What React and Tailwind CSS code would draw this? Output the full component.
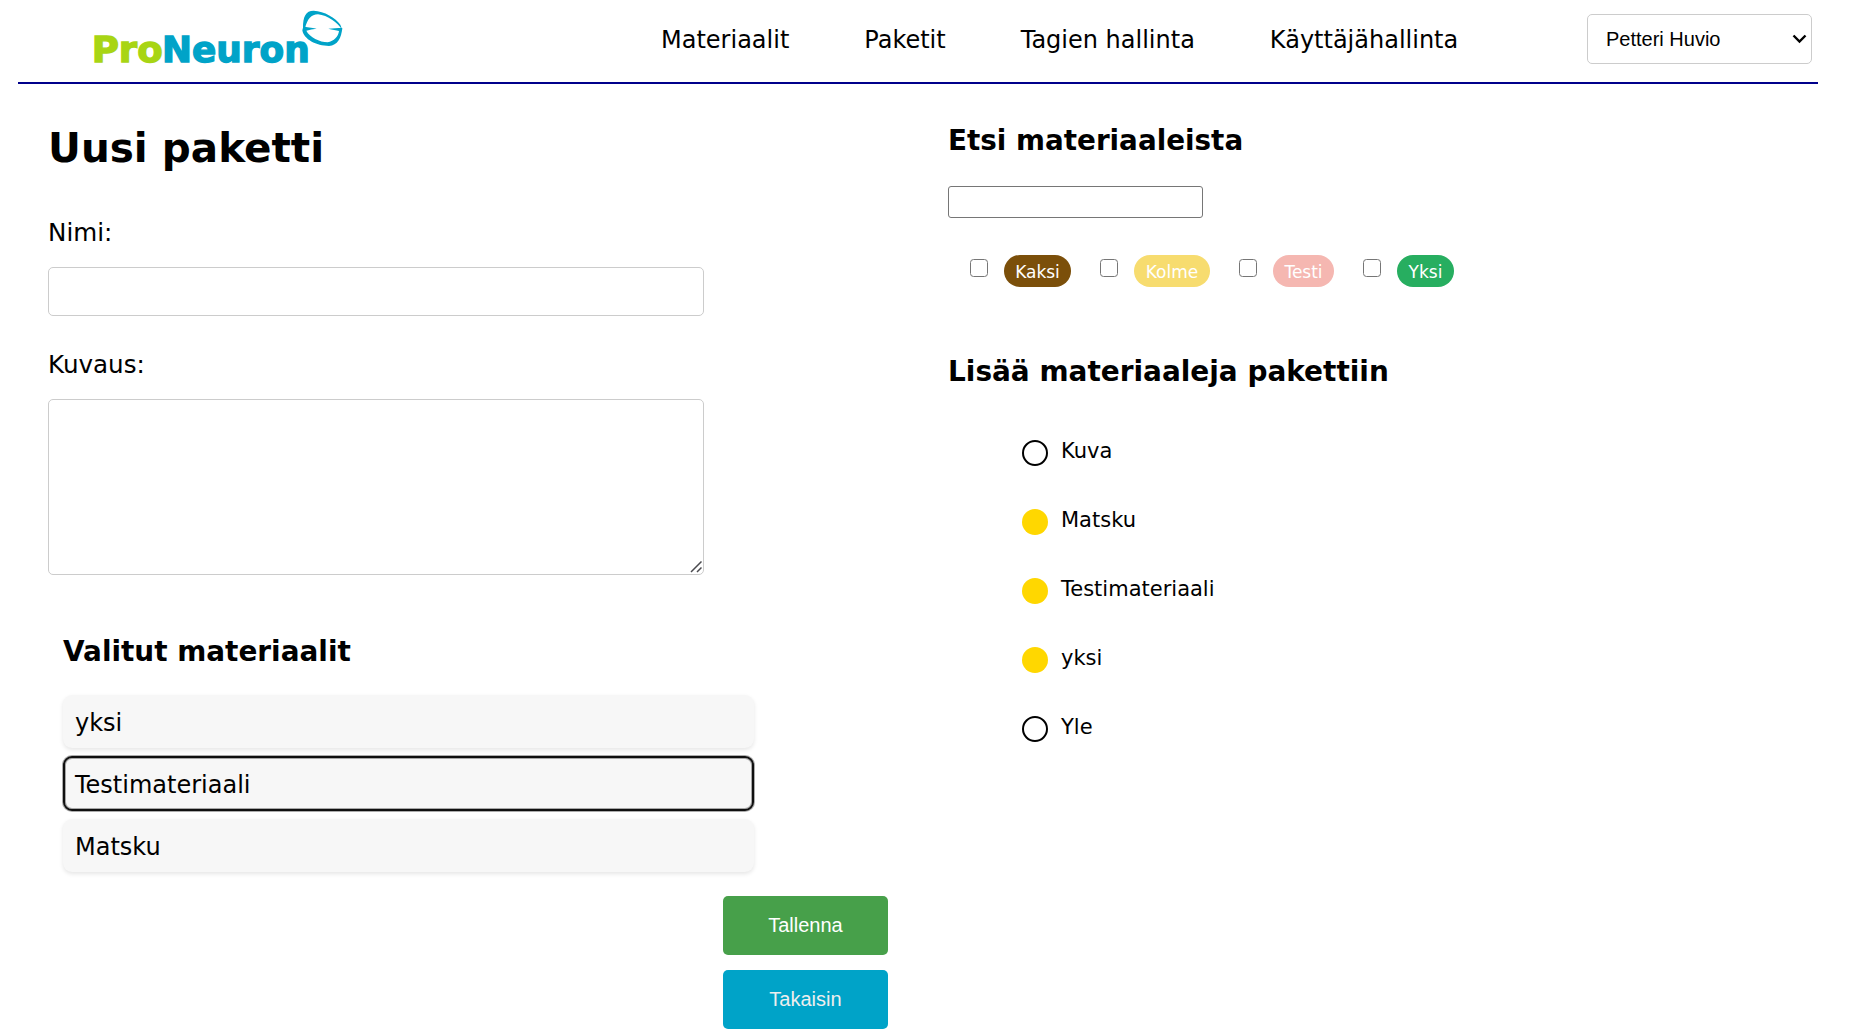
import React from "react";

function Logo() {
  return (
    <svg className="h-[65px] w-[270px] overflow-visible" viewBox="250 15 810 195" role="img" aria-label="ProNeuron">
      <g fontFamily="DejaVu Sans" fontWeight="700" fontSize="107">
        <text x="276" y="186" fill="#a8d514" stroke="#a8d514" strokeWidth="4" textLength="213" lengthAdjust="spacingAndGlyphs">Pro</text>
        <text x="487" y="186" fill="#00a3c8" stroke="#00a3c8" strokeWidth="4" textLength="443" lengthAdjust="spacingAndGlyphs">Neuron</text>
      </g>
      <g fill="#00a3c8">
        <path d="M910 84 C910 50 918 32 942 32 C974 33 1008 54 1022 74 L1028 90 C1014 68 984 46 955 43 C934 44 924 56 916 84 Z" />
        <path d="M908 91 C912 118 950 138 988 138 C1014 136 1025 114 1028 84 C1012 84 1000 85 986 86 C998 89 1010 91 1018 93 C1016 110 1003 123 984 127 C960 126 930 112 920 92 C930 89 940 87 951 86 C936 83 920 82 911 79 Z" />
      </g>
    </svg>
  );
}

const links = ["Materiaalit", "Paketit", "Tagien hallinta", "Käyttäjähallinta"];

const tags = [
  { name: "Kaksi", style: "w-[67px] bg-[#7b4f0a]" },
  { name: "Kolme", style: "w-[76px] bg-[#f7dc6f]" },
  { name: "Testi", style: "w-[61px] bg-[#f5b7b1]" },
  { name: "Yksi", style: "w-[57px] bg-[#27ae60]" },
];

const materials = [
  { name: "Kuva", selected: false },
  { name: "Matsku", selected: true },
  { name: "Testimateriaali", selected: true },
  { name: "yksi", selected: true },
  { name: "Yle", selected: false },
];

const chosen = [
  { name: "yksi", focused: false },
  { name: "Testimateriaali", focused: true },
  { name: "Matsku", focused: false },
];

function Header() {
  return (
    <header className="mx-[18px] flex h-[84px] w-[1800px] border-b-2 border-[#00008b]">
      <div className="w-[643px] pt-[5px] pl-[65px]">
        <Logo />
      </div>
      <nav className="flex h-20 flex-1 items-center gap-[75px] text-2xl whitespace-nowrap">
        {links.map((l) => (
          <a key={l} href="#">{l}</a>
        ))}
      </nav>
      <button className="mt-[14px] mr-[6px] flex h-[50px] w-[225px] items-center justify-between rounded-[5px] border border-[#ccc] pr-[4px] pl-[18px] font-['Liberation_Sans',sans-serif] text-[20px]">
        <span>Petteri Huvio</span>
        <svg className="h-[10px] w-[15px]" viewBox="0 0 15 10" fill="none" stroke="#000" strokeWidth="2.4">
          <path d="M1.5 1.5 L7.5 7.5 L13.5 1.5" />
        </svg>
      </button>
    </header>
  );
}

export default function App() {
  return (
    <div className="h-[1035px] w-[1857px] overflow-hidden bg-white font-['DejaVu_Sans',sans-serif] text-black">
      <Header />
      <main className="flex pl-12">
        <section className="w-[900px] pt-10">
          <h1 className="text-[40.5px] leading-[48px] font-bold">Uusi paketti</h1>
          <label className="mt-[46px] block text-[24.6px] leading-[30px]">Nimi:</label>
          <input className="mt-[19px] block h-[49px] w-[656px] rounded-[5px] border border-[#ccc]" />
          <label className="mt-[34px] block text-[24.6px] leading-[30px]">Kuvaus:</label>
          <div className="relative mt-[19px] h-[176px] w-[656px]">
            <textarea className="block h-full w-full resize-none rounded-[5px] border border-[#ccc]" />
            <svg className="absolute right-[2px] bottom-[2px] size-3" viewBox="0 0 12 12" stroke="#4a4a4f" strokeWidth="1.5">
              <path d="M1 11 L11.5 0.5 M7 11 L11.5 6.5" />
            </svg>
          </div>
          <h2 className="mt-[59px] ml-[15px] text-[27.9px] leading-9 font-bold">Valitut materiaalit</h2>
          <ul className="mt-[25px] ml-[14.5px] flex w-[691px] flex-col gap-[9px]">
            {chosen.map((m) => (
              <li
                key={m.name}
                className={
                  m.focused
                    ? "-my-px flex h-[55px] items-center rounded-[9px] border-2 border-[#101010] bg-[#f7f7f7] pt-[2px] pl-[10.5px] text-2xl shadow-[0_0_0_1px_rgba(16,16,16,0.35),inset_0_0_0_1px_rgba(16,16,16,0.35)]"
                    : "flex h-[53px] items-center rounded-[9px] bg-[#f7f7f7] pt-[2px] pl-[12.5px] text-2xl shadow-[0_2px_4px_rgba(0,0,0,0.1)]"
                }
              >
                {m.name}
              </li>
            ))}
          </ul>
          <div className="mt-6 ml-[675px] flex w-[165px] flex-col gap-[15px] font-['Liberation_Sans',sans-serif] text-[20px]">
            <button className="h-[59px] rounded-[5px] bg-[#47a04a] pb-[2px] text-white">Tallenna</button>
            <button className="h-[59px] rounded-[5px] bg-[#00a3c8] pb-[2px] text-[#eee]">Takaisin</button>
          </div>
        </section>
        <section className="pt-[39px]">
          <h2 className="text-[27.8px] leading-9 font-bold">Etsi materiaaleista</h2>
          <input className="mt-[27px] block h-8 w-[255px] rounded-[3px] border border-[#767676]" />
          <div className="mt-[37px] ml-[22px] flex h-8 gap-[29px] text-[17px] text-white">
            {tags.map((t) => (
              <div key={t.name} className="flex gap-4">
                <span className="mt-1 size-[18px] rounded-[3.5px] border-[1.5px] border-[#767676] bg-white" />
                <span className={"flex h-8 items-center justify-center rounded-full pt-[4px] " + t.style}>{t.name}</span>
              </div>
            ))}
          </div>
          <h2 className="mt-[67px] text-[27.95px] leading-9 font-bold">Lisää materiaaleja pakettiin</h2>
          <ul className="mt-[50px] ml-[74px] flex flex-col gap-[43px] text-[21px] leading-[26px]">
            {materials.map((m) => (
              <li key={m.name} className="flex h-[26px] gap-[13px]">
                <span className={m.selected ? "size-[26px] rounded-full bg-[#ffd700]" : "size-[26px] rounded-full border-2 border-black"} />
                <span className="-mt-[2px]">{m.name}</span>
              </li>
            ))}
          </ul>
        </section>
      </main>
    </div>
  );
}
